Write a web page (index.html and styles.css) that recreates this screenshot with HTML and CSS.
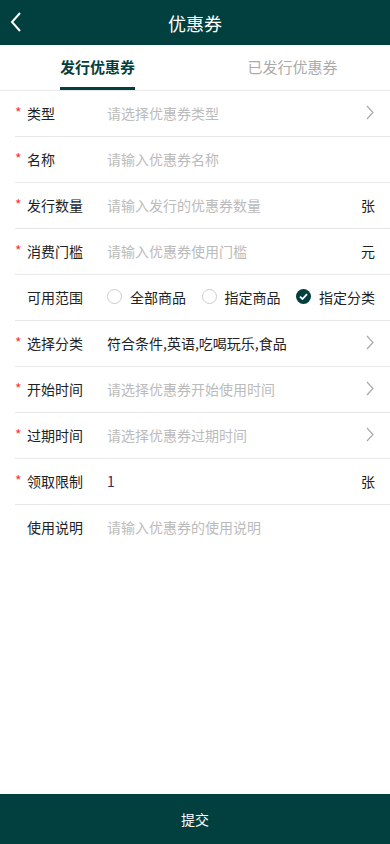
FILE: index.html
```html
<!DOCTYPE html>
<html lang="zh-CN">
<head>
    <meta charset="UTF-8">
    <meta name="viewport" content="width=device-width, initial-scale=1.0">
    <title>优惠券</title>
    <link rel="stylesheet" href="styles.css">
</head>
<body>
    <div class="header">
        <svg class="back" width="12" height="20" viewBox="0 0 12 20"><path d="M10 1 L2 10 L10 19" fill="none" stroke="#fff" stroke-width="2"/></svg>
        <h1>优惠券</h1>
    </div>

    <div class="tabs">
        <div class="tab active"><span>发行优惠券</span></div>
        <div class="tab"><span>已发行优惠券</span></div>
    </div>

    <div class="form">
        <div class="row">
            <span class="req">*</span>
            <span class="label">类型</span>
            <span class="value placeholder">请选择优惠券类型</span>
            <svg class="arrow" width="8" height="15" viewBox="0 0 8 15"><path d="M1 1 L7 7.5 L1 14" fill="none" stroke="#aaa" stroke-width="1.2"/></svg>
        </div>
        <div class="row">
            <span class="req">*</span>
            <span class="label">名称</span>
            <span class="value placeholder">请输入优惠券名称</span>
        </div>
        <div class="row">
            <span class="req">*</span>
            <span class="label">发行数量</span>
            <span class="value placeholder">请输入发行的优惠券数量</span>
            <span class="unit">张</span>
        </div>
        <div class="row">
            <span class="req">*</span>
            <span class="label">消费门槛</span>
            <span class="value placeholder">请输入优惠券使用门槛</span>
            <span class="unit">元</span>
        </div>
        <div class="row">
            <span class="req"></span>
            <span class="label">可用范围</span>
            <div class="radios">
                <span class="radio"><i class="circle"></i>全部商品</span>
                <span class="radio"><i class="circle"></i>指定商品</span>
                <span class="radio">
                    <svg class="checked" width="15" height="15" viewBox="0 0 15 15"><circle cx="7.5" cy="7.5" r="7.5" fill="#033f3e"/><path d="M4 7.6 L6.5 10 L11 5.2" fill="none" stroke="#fff" stroke-width="1.8"/></svg>指定分类
                </span>
            </div>
        </div>
        <div class="row">
            <span class="req">*</span>
            <span class="label">选择分类</span>
            <span class="value">符合条件,英语,吃喝玩乐,食品</span>
            <svg class="arrow" width="8" height="15" viewBox="0 0 8 15"><path d="M1 1 L7 7.5 L1 14" fill="none" stroke="#aaa" stroke-width="1.2"/></svg>
        </div>
        <div class="row">
            <span class="req">*</span>
            <span class="label">开始时间</span>
            <span class="value placeholder">请选择优惠券开始使用时间</span>
            <svg class="arrow" width="8" height="15" viewBox="0 0 8 15"><path d="M1 1 L7 7.5 L1 14" fill="none" stroke="#aaa" stroke-width="1.2"/></svg>
        </div>
        <div class="row">
            <span class="req">*</span>
            <span class="label">过期时间</span>
            <span class="value placeholder">请选择优惠券过期时间</span>
            <svg class="arrow" width="8" height="15" viewBox="0 0 8 15"><path d="M1 1 L7 7.5 L1 14" fill="none" stroke="#aaa" stroke-width="1.2"/></svg>
        </div>
        <div class="row">
            <span class="req">*</span>
            <span class="label">领取限制</span>
            <span class="value number">1</span>
            <span class="unit">张</span>
        </div>
        <div class="row last">
            <span class="req"></span>
            <span class="label">使用说明</span>
            <span class="value placeholder">请输入优惠券的使用说明</span>
        </div>
    </div>

    <div class="submit">提交</div>
</body>
</html>
```

FILE: styles.css
```css
body {
    margin: 0;
    font-family: "Noto Sans CJK SC", "Liberation Sans", sans-serif;
    background: #fff;
    color: #222;
    width: 390px;
    height: 844px;
    position: relative;
    overflow: hidden;
}

.header {
    height: 45px;
    background: #01403f;
    display: flex;
    align-items: center;
    justify-content: center;
    position: relative;
}

.header h1 {
    margin: 0;
    font-size: 18px;
    font-weight: normal;
    color: #fff;
}

.back {
    position: absolute;
    left: 10px;
    top: 12px;
}

.tabs {
    display: flex;
    height: 45px;
    border-bottom: 1px solid #e8e8e8;
}

.tab {
    flex: 1;
    display: flex;
    justify-content: center;
}

.tab span {
    display: flex;
    align-items: center;
    font-size: 15px;
    color: #aaa;
    border-bottom: 3px solid transparent;
    box-sizing: border-box;
    height: 45px;
    padding-top: 1px;
}

.tab.active span {
    color: #033f3e;
    font-weight: bold;
    border-bottom-color: #033f3e;
}

.form {
    padding-left: 15px;
}

.row {
    display: flex;
    align-items: center;
    height: 45px;
    box-sizing: border-box;
    height: 46px;
    padding-bottom: 2px;
    border-bottom: 1px solid #e8e8e8;
    padding-right: 15px;
    font-size: 14px;
}

.row.last {
    border-bottom: none;
}

.req {
    width: 12px;
    color: #f33;
    font-size: 14px;
    padding-bottom: 2px;
}

.label {
    width: 80px;
    color: #222;
}

.value {
    flex: 1;
    color: #222;
}

.value.placeholder {
    color: #bbb;
}

.value.number {
    color: #3a2a5a;
}

.unit {
    color: #222;
}

.arrow {
    margin-right: 1px;
}

.radios {
    display: flex;
    flex: 1;
    justify-content: space-between;
}

.radio {
    display: flex;
    align-items: center;
    gap: 8px;
    color: #222;
}

.circle {
    width: 13px;
    height: 13px;
    border: 1px solid #ccc;
    border-radius: 50%;
}

.submit {
    position: absolute;
    left: 0;
    right: 0;
    bottom: 0;
    height: 50px;
    background: #01403f;
    color: #fff;
    font-size: 14px;
    display: flex;
    align-items: center;
    justify-content: center;
}
```
